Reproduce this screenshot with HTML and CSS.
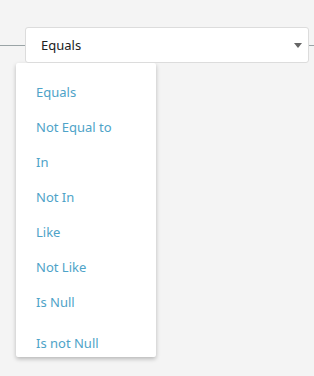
FILE: index.html
```html
<!DOCTYPE html>
<html lang="en">
<head>
    <meta charset="UTF-8">
    <title>Operator select</title>
    <link rel="stylesheet" href="styles.css">
</head>
<body>
    <div class="field-row">
        <div class="rule"></div>
        <div class="select">
            <span class="select-value">Equals</span>
            <svg class="caret" width="8" height="5" viewBox="0 0 8 5"><path d="M0 0H8L4 5Z" fill="#666"/></svg>
        </div>
        <div class="rule rule-end"></div>
    </div>
    <ul class="menu">
        <li>Equals</li>
        <li>Not Equal to</li>
        <li>In</li>
        <li>Not In</li>
        <li>Like</li>
        <li>Not Like</li>
        <li>Is Null</li>
        <li class="last">Is not Null</li>
    </ul>
</body>
</html>
```

FILE: styles.css
```css
body {
    margin: 0;
    background-color: #f4f4f4;
    font-family: 'Noto Sans', 'Open Sans', sans-serif;
    font-size: 13px;
    height: 376px;
    overflow: hidden;
}
.field-row {
    display: flex;
    align-items: center;
    margin-top: 27px;
}
.rule {
    width: 26px;
    height: 1px;
    background-color: #9aa4a6;
}
.rule-end {
    flex: 1;
}
.select {
    height: 34px;
    background-color: #fff;
    border: 1px solid #dcdcdc;
    border-radius: 3px;
    display: flex;
    align-items: center;
    justify-content: space-between;
    padding: 0 6px 0 15px;
    box-sizing: content-box;
    margin-left: -1px;
    width: 261px;
}
.select-value {
    color: #222;
}
.caret {
    margin-top: 1px;
}
.menu {
    list-style: none;
    margin: 0 0 0 16px;
    padding: 15px 0 0 20px;
    width: 120px;
    background-color: #fff;
    border-radius: 2px;
    box-shadow: 0 2px 4px rgba(0, 0, 0, 0.25);
    color: #4ea3c8;
}
.menu li {
    height: 35px;
    line-height: 28px;
}
.menu li.last {
    margin-top: 6px;
    height: 28px;
}
```
